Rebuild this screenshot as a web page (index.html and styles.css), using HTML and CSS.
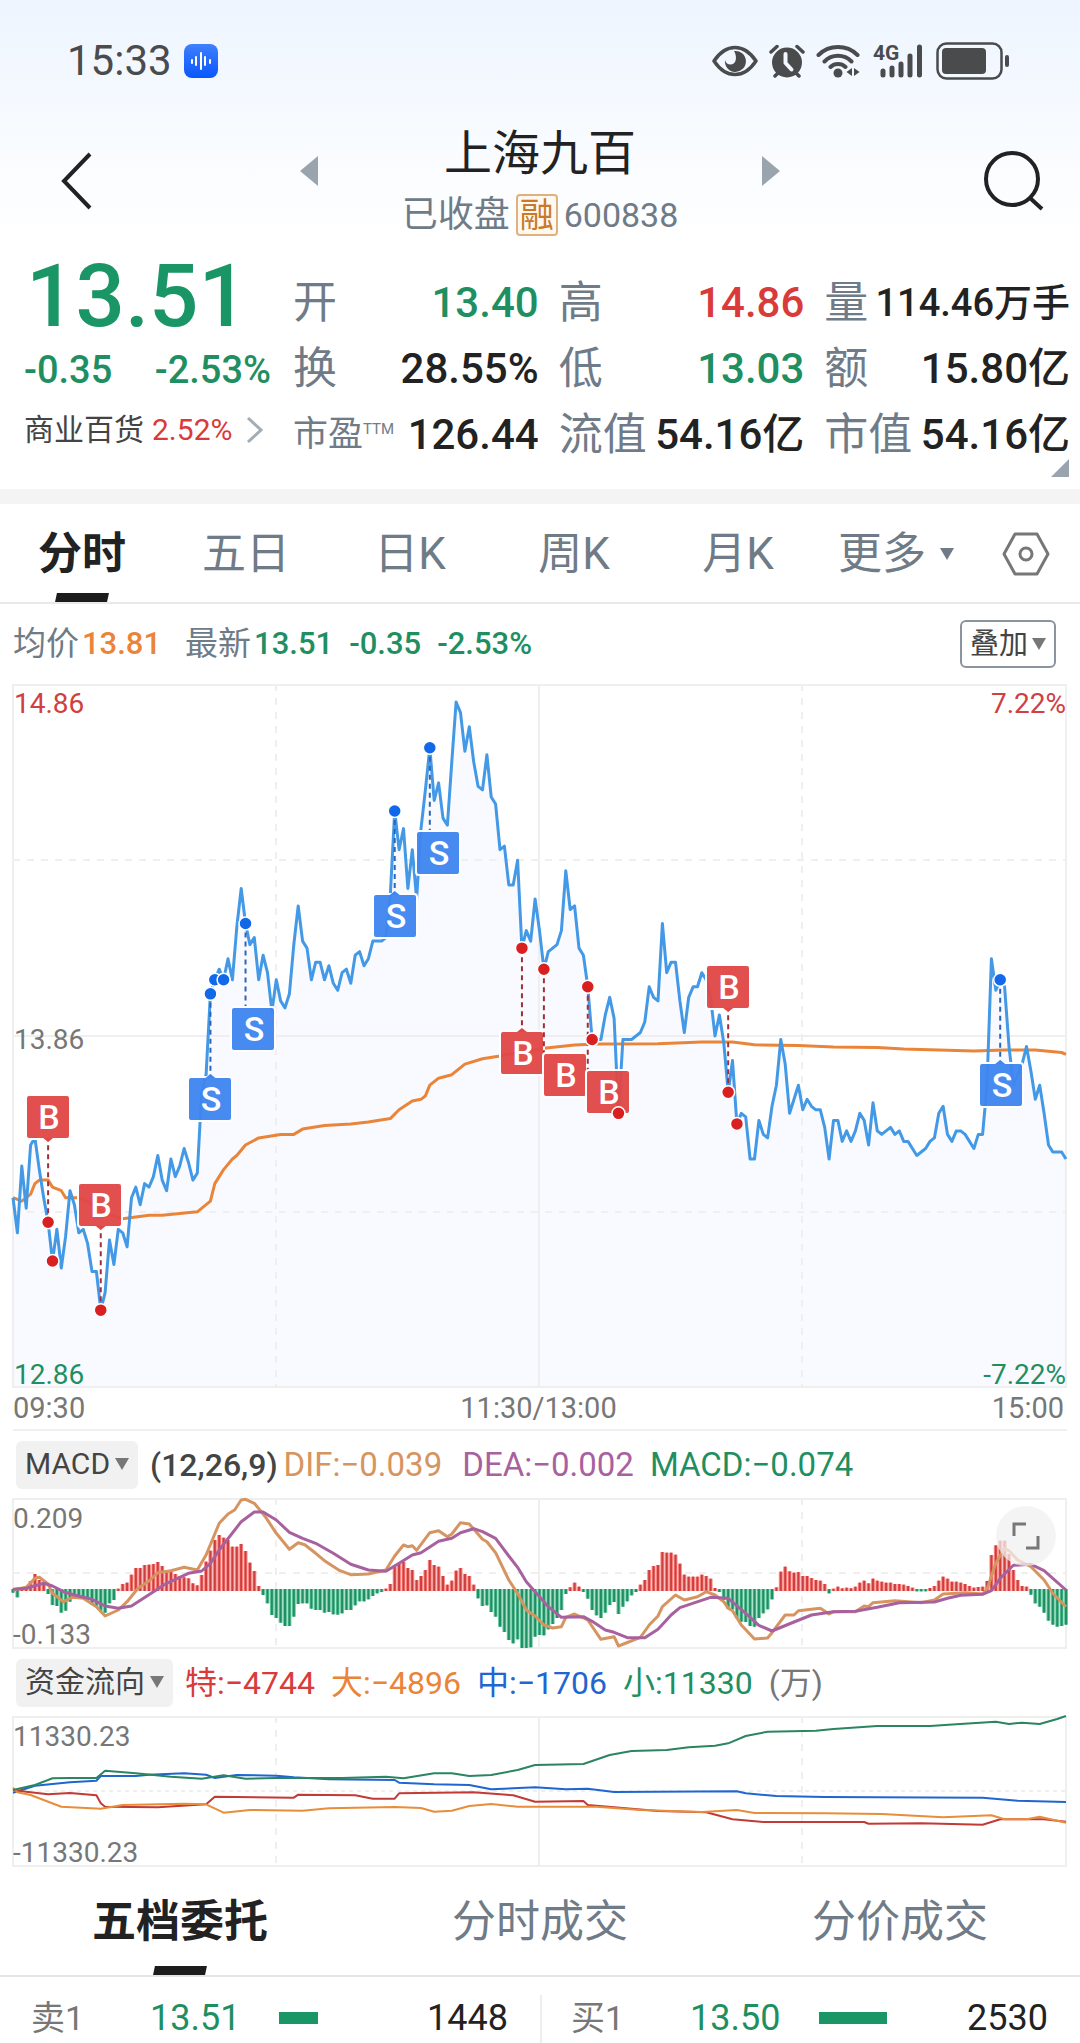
FILE: index.html
```
<!DOCTYPE html>
<html lang="zh-CN">
<head>
    <meta charset="UTF-8">
    <meta name="viewport" content="width=device-width, initial-scale=1.0">
    <title>上海九百 600838</title>
    <link rel="stylesheet" href="styles.css">
</head>
<body>
    <div class="top">
        <!-- Status bar -->
        <div class="status-bar">
            <span class="clock">15:33</span>
            <svg class="app-icon" width="34" height="34" viewBox="0 0 34 34">
                <defs>
                    <linearGradient id="app-bg" x1="0" y1="0" x2="0" y2="1">
                        <stop offset="0" stop-color="#3f80ff"/>
                        <stop offset="1" stop-color="#0a57fb"/>
                    </linearGradient>
                </defs>
                <rect width="34" height="34" rx="8" fill="url(#app-bg)"/>
                <path d="M8 16v3M12 13v8M17 9v16M21 13v8M26 16v3" stroke="#fff" stroke-width="2" stroke-linecap="round"/>
            </svg>
            <div class="status-icons">
                <svg width="46" height="32" viewBox="0 0 46 32">
                    <path d="M2 16C8 7 15 2.500 23 2.500S38 7 44 16C38 25 31 29.500 23 29.500S8 25 2 16Z" fill="none" stroke="#4a4b4d" stroke-width="3.500" stroke-linejoin="round"/>
                    <path d="M22 6a10.500 10.500 0 1 1-9 9a6 6 0 0 0 6 4.500c6-.5 6-9 3-13.500Z" fill="#4a4b4d"/>
                </svg>
                <svg width="36" height="34" viewBox="0 0 36 34">
                    <circle cx="18" cy="18.500" r="15" fill="#4a4b4d"/>
                    <path d="M2 8l6-5.500M34 8l-6-5.500M6 32l4-4M30 32l-4-4" stroke="#4a4b4d" stroke-width="3.500" stroke-linecap="round"/>
                    <path d="M16.500 10v9l6 6.500" fill="none" stroke="#f3f7fe" stroke-width="4" stroke-linecap="round" stroke-linejoin="round"/>
                </svg>
                <svg width="46" height="34" viewBox="0 0 46 34">
                    <path d="M2.500 11a28 28 0 0 1 39 0M8.500 17.500a19 19 0 0 1 27 0M14.500 23a11 11 0 0 1 15 0" fill="none" stroke="#4a4b4d" stroke-width="4" stroke-linecap="round"/>
                    <circle cx="22" cy="29" r="4.500" fill="#4a4b4d"/>
                    <path d="M36 24v8l-5.500-4zM38 24v8l5.500-4z" fill="#4a4b4d"/>
                </svg>
                <svg class="signal" width="52" height="36" viewBox="0 0 52 36">
                    <text class="net-label" x="0" y="17">4G</text>
                    <path d="M10 28v4M19 25v7M28 21v11M37 13v19M46.500 4v28" stroke="#4a4b4d" stroke-width="5" stroke-linecap="round"/>
                </svg>
                <svg width="74" height="38" viewBox="0 0 74 38">
                    <rect x="1.500" y="1.500" width="64" height="35" rx="9" fill="none" stroke="#4a4b4d" stroke-width="2.500"/>
                    <rect x="6" y="6" width="44" height="26" rx="4" fill="#4a4b4d"/>
                    <rect x="69" y="13" width="4" height="12" rx="2" fill="#4a4b4d"/>
                </svg>
            </div>
        </div>

        <!-- Stock name -->
        <header class="header">
            <button class="icon-btn" aria-label="返回">
                <svg width="32" height="58" viewBox="0 0 32 58"><path d="M29 2L3 29l26 27" fill="none" stroke="#222" stroke-width="4"/></svg>
            </button>
            <div class="switcher">
                <button class="icon-btn" aria-label="上一只">
                    <svg width="18" height="30" viewBox="0 0 18 30"><path d="M18 0v30L0 15z" fill="#9aa4ae"/></svg>
                </button>
                <div class="stock">
                    <h1>上海九百</h1>
                    <div class="stock-sub">
                        <span>已收盘</span>
                        <span class="margin-badge">融</span>
                        <span class="stock-code">600838</span>
                    </div>
                </div>
                <button class="icon-btn" aria-label="下一只">
                    <svg width="18" height="30" viewBox="0 0 18 30"><path d="M0 0v30l18-15z" fill="#9aa4ae"/></svg>
                </button>
            </div>
            <button class="icon-btn" aria-label="搜索">
                <svg width="62" height="62" viewBox="0 0 62 62"><circle cx="29" cy="29" r="26" fill="none" stroke="#222" stroke-width="4"/><path d="M47 48l12 11" stroke="#222" stroke-width="4"/></svg>
            </button>
        </header>
    </div>

    <!-- Quote -->
    <section class="quote">
        <div class="price-box">
            <div class="price">13.51</div>
            <div class="change"><span>-0.35</span><span>-2.53%</span></div>
            <a class="sector" href="#">
                <span>商业百货</span>
                <span class="red">2.52%</span>
                <svg width="18" height="28" viewBox="0 0 18 28"><path d="M2 2l13 12L2 26" fill="none" stroke="#a3adb5" stroke-width="3"/></svg>
            </a>
        </div>
        <dl class="stats">
            <div><dt>开</dt><dd class="green">13.40</dd></div>
            <div><dt>高</dt><dd class="red">14.86</dd></div>
            <div><dt>量</dt><dd class="small">114.46万手</dd></div>
            <div><dt>换</dt><dd>28.55%</dd></div>
            <div><dt>低</dt><dd class="green">13.03</dd></div>
            <div><dt>额</dt><dd>15.80亿</dd></div>
            <div><dt class="small">市盈<sup>TTM</sup></dt><dd>126.44</dd></div>
            <div><dt>流值</dt><dd>54.16亿</dd></div>
            <div><dt>市值</dt><dd>54.16亿</dd></div>
        </dl>
        <svg class="corner" width="18" height="18" viewBox="0 0 18 18"><path d="M18 0v18H0z" fill="#9aa4ae"/></svg>
    </section>

    <!-- Period tabs -->
    <nav class="tabs">
        <button class="tab active">分时</button>
        <button class="tab">五日</button>
        <button class="tab">日K</button>
        <button class="tab">周K</button>
        <button class="tab">月K</button>
        <button class="tab">更多<i class="caret"></i></button>
        <button class="tab" aria-label="设置">
            <svg width="48" height="44" viewBox="0 0 48 44"><path d="M13 2h22l11 20-11 20H13L2 22z" fill="none" stroke="#777" stroke-width="3" stroke-linejoin="round"/><circle cx="24" cy="22" r="6" fill="none" stroke="#777" stroke-width="3"/></svg>
        </button>
    </nav>

    <section class="charts">
        <div class="legend">
            <span class="label">均价</span><span class="orange">13.81</span>
            <span class="label latest">最新</span><span class="green">13.51</span>
            <span class="green step">-0.35</span>
            <span class="green step">-2.53%</span>
            <button class="overlay-btn">叠加<i class="caret"></i></button>
        </div>
        <svg id="price-chart" class="chart" viewBox="0 0 1054 704"></svg>
        <div class="times"><span>09:30</span><span>11:30/13:00</span><span>15:00</span></div>

        <div class="indicator">
            <button class="picker">MACD<i class="caret"></i></button>
            <span class="params">(12,26,9)</span>
            <span class="dif">DIF:−0.039</span>
            <span class="dea">DEA:−0.002</span>
            <span class="green">MACD:−0.074</span>
        </div>
        <div class="chart-wrap">
            <svg id="macd-chart" class="chart" viewBox="0 0 1054 151"></svg>
            <button class="expand" aria-label="全屏">
                <svg width="28" height="28" viewBox="0 0 28 28"><path d="M2 14V2h12M26 14v12H14" fill="none" stroke="#777" stroke-width="3"/></svg>
            </button>
        </div>

        <div class="indicator flow">
            <button class="picker">资金流向<i class="caret"></i></button>
            <span class="red">特:−4744</span>
            <span class="orange">大:−4896</span>
            <span class="blue">中:−1706</span>
            <span class="green">小:11330</span>
            <span class="unit">(万)</span>
        </div>
        <svg id="flow-chart" class="chart" viewBox="0 0 1054 151"></svg>
    </section>

    <!-- Order book -->
    <nav class="book-tabs">
        <button class="tab active">五档委托</button>
        <button class="tab">分时成交</button>
        <button class="tab">分价成交</button>
    </nav>
    <table class="orders">
        <tr>
            <th scope="row">卖1</th>
            <td class="green">13.51</td>
            <td><div class="bar" style="width: 39px"></div></td>
            <td class="volume">1448</td>
            <th scope="row" class="buy">买1</th>
            <td class="green">13.50</td>
            <td><div class="bar" style="width: 68px"></div></td>
            <td class="volume">2530</td>
        </tr>
    </table>
    <script src="charts.js"></script>
</body>
</html>
```
FILE: styles.css
```
* {
    box-sizing: border-box;
}
body {
    margin: 0;
    background: #fff;
    color: #222;
    font-family: Roboto, "Noto Sans CJK SC", sans-serif;
    overflow-x: hidden;
}
button {
    border: none;
    background: none;
    padding: 0;
    color: inherit;
    font-family: inherit;
    cursor: pointer;
}
svg {
    display: block;
}
.red { color: #d93a3a; }
.green { color: #1f8f62; }
.orange { color: #ea8438; }
.blue { color: #1f66d0; }

.top {
    background: linear-gradient(#eef5ff, #fff);
}
.status-bar {
    display: flex;
    align-items: center;
    height: 121px;
    padding: 0 70px 0 67px;
}
.clock {
    font-size: 42px;
    line-height: 48px;
    color: #4a4b4d;
}
.app-icon {
    margin-left: 12px;
}
.status-icons {
    display: flex;
    align-items: center;
    gap: 11px;
    margin-left: auto;
}
.signal {
    overflow: visible;
}
.net-label {
    font: bold 21px Roboto, sans-serif;
    fill: #4a4b4d;
}

.header {
    display: flex;
    justify-content: space-between;
    align-items: center;
    height: 119px;
    padding: 0 35px 0 61px;
}
.switcher {
    display: flex;
    justify-content: space-between;
    width: 480px;
    margin-left: 4px;
}
.switcher .icon-btn {
    align-self: flex-start;
    margin-top: 36px;
}
.stock {
    text-align: center;
}
h1 {
    margin: 0;
    font-size: 48px;
    font-weight: 400;
    line-height: 68px;
}
.stock-sub {
    display: flex;
    align-items: center;
    gap: 6px;
    height: 54px;
    color: #6f7b87;
    font-size: 36px;
    line-height: 42px;
}
.margin-badge {
    width: 42px;
    height: 42px;
    border: 2px solid #e0b080;
    border-radius: 4px;
    background: #fff8ee;
    color: #c87a2a;
    font-size: 34px;
    line-height: 38px;
}
.stock-code {
    font-size: 34px;
}

.quote {
    position: relative;
    display: flex;
    height: 249px;
    padding: 6px 10px 0 24px;
}
.price-box {
    width: 247px;
    margin-right: 22px;
}
.price {
    padding-left: 2px;
    color: #1a9565;
    font-size: 87px;
    font-weight: 500;
    line-height: 100px;
}
.change {
    display: flex;
    justify-content: space-between;
    color: #1f8f62;
    font-size: 38px;
    font-weight: 500;
    line-height: 48px;
}
.sector {
    display: flex;
    align-items: center;
    gap: 8px;
    margin-top: 12px;
    color: #444;
    font-size: 30px;
    line-height: 48px;
    text-decoration: none;
}
.sector svg {
    margin-left: 6px;
}
.stats {
    flex: 1;
    display: grid;
    grid-template-columns: repeat(3, 1fr);
    grid-auto-rows: 66px;
    column-gap: 20px;
    margin: 24px 0 0;
}
.stats div {
    display: flex;
    justify-content: space-between;
    align-items: center;
    white-space: nowrap;
    line-height: 60px;
}
.stats dt {
    color: #6f7b87;
    font-size: 44px;
}
.stats dt.small {
    font-size: 35px;
}
.stats dd {
    margin: 0;
    font-size: 42px;
    font-weight: 500;
}
.stats dd.small {
    font-size: 38px;
}
.stats sup {
    font-size: 15px;
    line-height: 16px;
    vertical-align: 12px;
}
.corner {
    position: absolute;
    right: 11px;
    bottom: 12px;
}

.tabs {
    display: grid;
    grid-template-columns: repeat(5, 164fr) 152fr 108fr;
    height: 115px;
    border-top: 15px solid #f4f4f4;
    border-bottom: 2px solid #e9e9e9;
}
.tab {
    position: relative;
    display: flex;
    justify-content: center;
    align-items: center;
    padding-top: 2px;
    color: #6f7b87;
    font-size: 44px;
    line-height: 60px;
}
.tab.active {
    color: #222;
    font-weight: 700;
}
.tab.active::after {
    content: "";
    position: absolute;
    left: 50%;
    bottom: 0;
    width: 52px;
    height: 9px;
    margin-left: -26px;
    background: #1c1c1c;
    transform: skewX(-12deg);
}
.caret {
    flex: none;
    margin-left: 6px;
    border: 7px solid transparent;
    border-top: 12px solid #777;
    border-bottom: 0;
}
.tab .caret {
    margin-left: 14px;
    border-top-color: #6f7b87;
}

.charts {
    padding: 0 13px;
}
.chart {
    width: 100%;
    height: auto;
    overflow: visible;
}
.legend {
    display: flex;
    align-items: center;
    height: 80px;
    font-size: 31px;
    font-weight: 500;
    line-height: 48px;
}
.legend .label {
    margin-right: 3px;
    color: #6f7b87;
    font-size: 33px;
    font-weight: 400;
}
.legend .latest {
    margin-left: 24px;
}
.legend .step {
    margin-left: 16px;
}
.overlay-btn {
    display: flex;
    align-items: center;
    height: 48px;
    margin-left: auto;
    margin-right: 11px;
    padding: 0 8px 1px;
    border: 2px solid #8a949e;
    border-radius: 6px;
    color: #444;
    font-size: 29px;
    line-height: 40px;
}
.overlay-btn .caret {
    margin-left: 4px;
}
.times {
    display: flex;
    justify-content: space-between;
    height: 43px;
    padding-right: 3px;
    border-bottom: 2px solid #f0f0f0;
    color: #777;
    font-size: 29px;
    line-height: 40px;
}
.indicator {
    display: flex;
    align-items: center;
    height: 67px;
    padding-left: 3px;
    font-size: 32px;
    line-height: 48px;
    white-space: nowrap;
}
.picker {
    display: flex;
    align-items: center;
    height: 48px;
    margin-right: 12px;
    padding: 0 9px 1px;
    border-radius: 6px;
    background: #f1f1f1;
    color: #444;
    font-size: 30px;
    line-height: 40px;
}
.picker .caret {
    margin-left: 5px;
}
.params {
    margin-right: 6px;
    color: #444;
    font-weight: 500;
}
.dif,
.dea,
.dea + .green {
    font-size: 33px;
}
.dif {
    margin-right: 20px;
    color: #d69460;
}
.dea {
    margin-right: 16px;
    color: #a8619f;
}
.flow {
    gap: 16px;
}
.flow .picker {
    margin-right: -4px;
}
.unit {
    color: #777;
}
.chart-wrap {
    position: relative;
}
.expand {
    position: absolute;
    top: 8px;
    right: 11px;
    display: flex;
    justify-content: center;
    align-items: center;
    width: 60px;
    height: 60px;
    border-radius: 50%;
    background: rgba(240, 240, 240, 0.75);
}

.chart text {
    font-family: Roboto, sans-serif;
    font-size: 28px;
    fill: #777;
}
.chart .up { fill: #d04040; }
.chart .down { fill: #1f8f62; }
.chart .flag {
    font-size: 34px;
    font-weight: 500;
    fill: #fff;
    text-anchor: middle;
}
.chart .end {
    text-anchor: end;
}

.book-tabs {
    display: grid;
    grid-template-columns: repeat(3, 1fr);
    height: 110px;
    border-bottom: 2px solid #e4e4e4;
}
.orders {
    width: 100%;
    table-layout: fixed;
    border-collapse: collapse;
    font-size: 36px;
    line-height: 50px;
}
.orders th,
.orders td {
    padding: 16px 0 0;
    font-weight: 400;
    text-align: left;
}
.orders th {
    width: 150px;
    padding-left: 31px;
    color: #777;
    font-size: 34px;
}
.orders .green {
    width: 129px;
}
.orders .volume {
    width: 140px;
    padding-right: 32px;
    text-align: right;
}
.orders .buy {
    background: linear-gradient(#eee, #eee) left bottom / 2px 48px no-repeat;
}
.bar {
    height: 12px;
    background: #1a9565;
}
```
FILE: charts.js
```
// Session is 240 minutes wide, both halves joined at 11:30/13:00
const WIDTH = 1054;
const MINUTES = 240;
const BLUE = '#4499e6';
const x = minute => minute * (WIDTH - 1) / MINUTES;

// Price per minute, in cents from the previous close (13.86)
const price = [
    -46, -56, -37, -49, -31, -29, -38, -46, -53, -64, -55, -66, -57, -44, -48, -56, -55, -59, -67, -67,
    -78, -73, -58, -65, -55, -56, -60, -46, -43, -48, -42, -43, -40, -34, -41, -44, -35, -40, -37, -32,
    -36, -41, -39, -16, -11, 12, 16, 19, 16, 22, 16, 31, 42, 32, 26, 28, 16, 23, 18, 7,
    16, 10, 8, 12, 26, 37, 27, 25, 16, 21, 21, 16, 20, 15, 13, 18, 19, 15, 23, 24,
    20, 22, 27, 27, 27, 28, 40, 64, 53, 59, 42, 53, 39, 59, 70, 82, 67, 72, 62, 60,
    78, 95, 92, 81, 88, 78, 71, 70, 80, 68, 66, 53, 54, 43, 43, 50, 25, 30, 27, 39,
    30, 19, 24, 25, 26, 30, 47, 36, 37, 25, 23, 14, -1, -1, -1, 6, 11, 5, -22, -1,
    -1, -1, 0, 1, 4, 14, 11, 10, 32, 18, 21, 21, 10, 1, 11, 14, 14, 18, 16, 11,
    0, 6, -2, -16, -7, -25, -22, -23, -35, -35, -24, -28, -29, -20, -14, -1, -8, -22, -18, -14,
    -21, -18, -20, -21, -21, -26, -35, -24, -24, -30, -27, -30, -27, -22, -24, -31, -19, -27, -28, -27,
    -26, -28, -27, -30, -30, -32, -34, -33, -32, -30, -29, -22, -20, -28, -30, -27, -27, -28, -30, -32,
    -28, -28, -14, 22, 13, 16, 14, -3, -14, -11, -8, -3, -10, -18, -14, -22, -31, -33, -33, -33, -35
];

// [minute, cents]
const average = [
    [0, -46], [2, -47], [4, -45], [5, -42], [6, -41], [8, -41], [9, -43], [11, -44], [12, -46], [15, -46],
    [17, -47], [20, -50], [25, -52], [31, -51], [34, -51], [42, -50], [45, -47], [46, -42], [48, -38],
    [50, -35], [51, -34], [53, -31], [56, -29], [61, -28], [64, -28], [66, -26.500], [71, -25.500], [77, -25],
    [81, -24.500], [86, -23.500], [88, -21], [91, -18.500], [93, -18], [94, -17], [95, -14], [97, -12], [100, -11],
    [103, -8], [107, -6.500], [111, -5.700], [116, -4.500], [121, -3.500], [128, -2.600], [133, -2.300], [147, -2.200],
    [157, -1.700], [164, -1.700], [169, -2.500], [179, -2.700], [187, -3.100], [197, -3.300], [203, -3.700],
    [219, -4.300], [226, -4], [233, -4], [239, -4.700], [240, -5.200]
];

// Trades: type, minute of the stem, left and top of the flag
const trades = [
    ['B', 8, 14, 412], ['B', 20, 66, 500], ['S', 45, 176, 394], ['S', 53, 219, 324],
    ['S', 87, 361, 211], ['S', 95, 404, 148], ['B', 116, 488, 348], ['B', 121, 531, 370],
    ['B', 131, 574, 387], ['B', 163, 694, 282], ['S', 225, 967, 380]
];
const buyDots = [8, 9, 20, 116, 121, 131, 132, 138, 163, 165];
const sellDots = [45, 46, 48, 53, 87, 95, 225];

const macd = [
    -8, -22, 8, 5, 27, 48, 30, 20, -12, -45, -48, -68, -62, -35, -20, -15, -20, -22, -45, -50,
    -62, -68, -40, -30, 4, 18, 22, 46, 66, 66, 75, 76, 78, 84, 72, 58, 55, 48, 42, 38,
    35, 20, 14, 45, 85, 118, 150, 165, 157, 150, 130, 130, 138, 117, 82, 57, 12, -15, -40, -75,
    -84, -98, -108, -108, -80, -42, -40, -40, -56, -60, -60, -68, -66, -73, -74, -70, -60, -60, -46, -34,
    -34, -28, -18, -10, -6, 4, 18, 70, 78, 85, 66, 60, 30, 42, 60, 90, 75, 70, 42, 16,
    28, 58, 66, 48, 42, 16, -25, -48, -46, -66, -80, -110, -126, -150, -160, -148, -174, -174, -172, -140,
    -135, -136, -118, -102, -84, -60, -12, 8, 22, 10, -6, -26, -60, -76, -84, -68, -45, -36, -72, -50,
    -34, -16, -6, 16, 30, 60, 72, 75, 114, 112, 112, 106, 79, 46, 40, 40, 40, 46, 42, 34,
    6, -6, -30, -56, -58, -85, -95, -96, -108, -110, -84, -70, -58, -28, 8, 55, 70, 56, 52, 54,
    42, 42, 36, 30, 28, 18, -10, 4, 10, 5, 7, 5, 10, 22, 28, 20, 34, 28, 25, 22,
    22, 18, 18, 16, 12, 7, -4, -4, -4, 6, 12, 28, 40, 34, 25, 25, 22, 18, 12, 7,
    9, 10, 27, 105, 134, 148, 148, 108, 60, 30, 12, 10, -14, -40, -50, -68, -92, -104, -110, -108, -104
];
const dif = [
    [0, 0], [3, 8], [5, 35], [6, 38], [8, 18], [9, -10], [11.500, -35], [13.500, -22], [16, -25], [19, -50], [21, -78],
    [24, -60], [26, -35], [28.500, 5], [31, 27], [33, 52], [36, 58], [39, 68], [42, 60], [44, 105], [47, 200],
    [49, 228], [50.500, 240], [52, 270], [53, 272], [55, 260], [57.500, 220], [60, 170], [63, 122], [65, 142],
    [66.500, 136], [69, 110], [71, 88], [74.500, 58], [77, 46], [81, 48], [85, 60], [87, 102], [89, 135], [90, 130],
    [91, 133], [92, 119], [95, 172], [97, 178], [99, 160], [100, 168], [102, 202], [104, 198], [107, 152],
    [108, 145], [110, 112], [113, 30], [115, -10], [117, -60], [119, -78], [121, -105], [123, -114], [125, -110],
    [126, -82], [128, -72], [131, -90], [134, -148], [137, -140], [138, -168], [143, -142], [145, -105],
    [147, -78], [148, -50], [151, -15], [153, -30], [156, -20], [158, -5], [160, -15], [162, -35], [163, -55],
    [164, -62], [166, -105], [169, -147], [172, -144], [173, -128], [176, -75], [178, -75], [179, -62],
    [184, -55], [186, -72], [187, -65], [192, -65], [194, -48], [195, -50], [196, -38], [201, -32], [207, -38],
    [210, -30], [212, -12], [217, -8], [221, -12], [222, 2], [224, 80], [226, 125], [227, 118], [229, 90],
    [232, 70], [235, 30], [237, -10], [240, -50]
];
const dea = [
    [0, 2], [3, 5], [7, 20], [9, 12], [11.500, -5], [14, -15], [18, -28], [21, -48], [24, -55], [27, -48], [31.500, -10],
    [35, 20], [40, 50], [43, 57], [45, 80], [47, 120], [52, 205], [55, 234], [57, 234], [60, 210], [63, 173],
    [66, 155], [69, 140], [73, 110], [77, 77], [81, 60], [85, 56], [88, 80], [91, 105], [93, 112], [97, 146],
    [100, 155], [102, 172], [105, 184], [107, 175], [110, 155], [113, 102], [115, 68], [117, 25], [119, -5],
    [122, -50], [125, -82], [130, -80], [132, -94], [135, -120], [137, -127], [140, -143], [144, -143],
    [147, -118], [150, -75], [152, -53], [159, -22], [163, -25], [167, -70], [170, -106], [173, -123],
    [178, -96], [182, -75], [187, -65], [192, -64], [197, -52], [202, -38], [210, -36], [213, -25], [216, -16],
    [221, -13], [223, -2], [225, 35], [228, 74], [232, 77], [235, 58], [237, 35], [240, 0]
];

const flows = {
    '#1f66d0': [
        [0, -5], [5, 16], [13, 26], [19, 31], [20, 45], [28, 45], [31, 49], [39, 53], [44, 49], [46, 39], [51, 48],
        [60, 46], [64, 41], [72, 35], [87, 33], [88, 25], [96, 20], [104, 18], [109, 5], [119, 11], [126, 5],
        [131, 7], [137, -3], [165, -1], [167, -7], [174, -15], [185, -18], [221, -20], [229, -29], [240, -33]
    ],
    '#c23a36': [
        [0, 3], [3, -2], [5, -5], [8, -10], [13, -6], [19, -13], [20, -37], [21, -47], [33, -49], [44, -40],
        [46, -17], [64, -20], [65, -11], [78, -13], [82, -23], [87, -23], [88, -7], [105, -4], [114, -13],
        [119, -32], [130, -30], [131, -42], [147, -60], [158, -64], [164, -85], [171, -93], [194, -93],
        [195, -98], [207, -97], [221, -101], [225, -85], [235, -85], [240, -92]
    ],
    '#e88d3a': [
        [0, 10], [1, -4], [4, -12], [11, -47], [20, -53], [25, -42], [39, -38], [44, -40], [48, -65], [54, -57],
        [66, -59], [72, -52], [87, -48], [93, -51], [96, -62], [100, -59], [104, -45], [109, -39], [115, -47],
        [133, -47], [143, -57], [157, -63], [165, -57], [169, -66], [185, -67], [198, -69], [212, -79],
        [223, -73], [226, -85], [231, -85], [234, -77], [240, -95]
    ],
    '#2a8560': [
        [0, 3], [5, 18], [9, 38], [13, 39], [19, 39], [21, 61], [28, 53], [36, 43], [43, 37], [48, 47], [53, 37],
        [60, 39], [75, 39], [85, 43], [89, 38], [96, 53], [100, 53], [104, 45], [109, 48], [115, 63], [119, 78],
        [130, 81], [136, 108], [141, 120], [149, 123], [154, 131], [160, 136], [163, 143], [167, 165],
        [172, 178], [183, 181], [187, 186], [197, 195], [209, 195], [215, 200], [224, 208], [227, 201],
        [230, 205], [234, 201], [238, 216], [240, 225]
    ]
};

function polyline(points, y, color, width) {
    const list = points.map(([m, v]) => x(m).toFixed(1) + ',' + y(v).toFixed(1)).join(' ');
    return `<polyline points="${list}" fill="none" stroke="${color}" stroke-width="${width}" stroke-linejoin="round"/>`;
}

function line(x1, y1, x2, y2, extra) {
    return `<line x1="${x1}" y1="${y1}" x2="${x2}" y2="${y2}" stroke="#efefef" stroke-width="2" ${extra || ''}/>`;
}

// Frame, centre line and dashed quarter lines
function grid(height) {
    const dash = 'stroke-dasharray="7 7"';
    return `<rect x="0" y="1" width="${WIDTH - 1}" height="${height - 2}" fill="none" stroke="#efefef" stroke-width="2"/>` +
        line(526, 0, 526, height) + line(263, 0, 263, height, dash) + line(789, 0, 789, height, dash);
}

function drawPrice() {
    const y = v => 352 - v * 3.515;
    const points = price.map((v, i) => [i, v]);
    const area = points.map(([m, v]) => x(m).toFixed(1) + ',' + y(v).toFixed(1)).join(' ');
    let out = `<polygon points="0,704 ${area} 1053,704" fill="#f8faff"/>`;
    out += grid(704) + line(0, 352, WIDTH, 352);
    out += line(0, 176, WIDTH, 176, 'stroke-dasharray="7 7"') + line(0, 528, WIDTH, 528, 'stroke-dasharray="7 7"');
    out += polyline(average, y, '#ea8438', 3) + polyline(points, y, BLUE, 3);

    trades.forEach(([type, minute, left, top]) => {
        const color = type === 'B' ? '#e04848' : '#3f86f0';
        const stem = type === 'B' ? '#a03038' : '#2a66b8';
        const cx = x(minute);
        const dotY = y(price[minute]);
        const above = top < dotY;
        const edge = above ? top + 42 : top;
        out += `<line x1="${cx}" y1="${dotY}" x2="${cx}" y2="${edge}" stroke="${stem}" stroke-width="2" stroke-dasharray="5 4"/>`;
        out += `<rect x="${left - 1}" y="${top - 1}" width="44" height="44" rx="3" fill="${color}" fill-opacity=".96" stroke="#fff" stroke-width="2"/>`;
        if (Math.abs(left + 21 - cx) < 4) {
            const tip = above ? edge + 4 : edge - 4;
            out += `<path d="M${cx - 5} ${edge}L${cx} ${tip}L${cx + 5} ${edge}z" fill="${color}"/>`;
        }
        out += `<text class="flag" x="${left + 22}" y="${top + 33}">${type}</text>`;
    });
    const dot = color => m => {
        out += `<circle cx="${x(m)}" cy="${y(price[m])}" r="6.500" fill="${color}" stroke="#fff" stroke-width="1.500"/>`;
    };
    buyDots.forEach(dot('#d82020'));
    sellDots.forEach(dot('#1268ea'));

    out += '<text class="up" x="1" y="29">14.86</text><text class="up end" x="1053" y="29">7.22%</text>';
    out += '<text x="1" y="365">13.86</text>';
    out += '<text class="down" x="1" y="700">12.86</text><text class="down end" x="1053" y="700">-7.22%</text>';
    document.getElementById('price-chart').innerHTML = out;
}

function drawMacd() {
    const y = v => 92 - v / 3;
    let out = grid(151) + line(0, 75, WIDTH, 75, 'stroke-dasharray="7 7"');
    macd.forEach((v, i) => {
        const h = Math.abs(v) / 3 + 1;
        const top = v > 0 ? 93 - h : 91;
        out += `<rect x="${x(i) - 2}" y="${top}" width="4" height="${h}" fill="${v > 0 ? '#ff8a86' : '#6ccaa4'}"/>`;
        out += `<rect x="${x(i) - 1}" y="${top}" width="2" height="${h}" fill="${v > 0 ? '#cc3f3f' : '#1f8f62'}"/>`;
    });
    out += polyline(dif, y, '#d69460', 3) + polyline(dea, y, '#a8619f', 3);
    out += '<text x="0" y="30">0.209</text><text x="0" y="146">-0.133</text>';
    document.getElementById('macd-chart').innerHTML = out;
}

function drawFlow() {
    const y = v => 75 - v / 3;
    let out = grid(151) + line(0, 75, WIDTH, 75, 'stroke-dasharray="4 4"');
    Object.keys(flows).forEach(color => {
        out += polyline(flows[color], y, color, 2);
    });
    out += '<text x="0" y="30">11330.23</text><text x="0" y="146">-11330.23</text>';
    document.getElementById('flow-chart').innerHTML = out;
}

drawPrice();
drawMacd();
drawFlow();
```
